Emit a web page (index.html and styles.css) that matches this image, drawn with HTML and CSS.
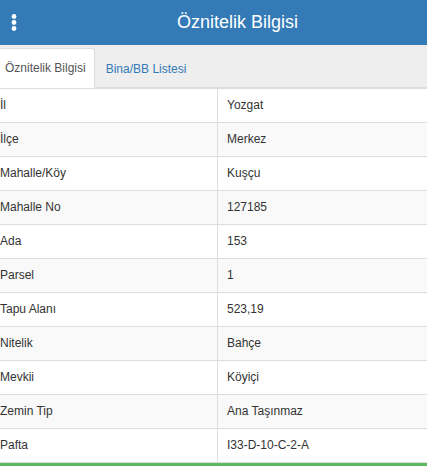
FILE: index.html
```html
<!DOCTYPE html>
<html lang="tr">
<head>
<meta charset="utf-8">
<title>Öznitelik Bilgisi</title>
<link rel="stylesheet" href="styles.css">
</head>
<body>
<header class="topbar">
  <div class="menu">
    <svg width="8" height="20" viewBox="0 0 8 20" aria-hidden="true">
      <circle cx="4" cy="3.5" r="2.4" fill="#fff"/>
      <circle cx="4" cy="9.5" r="2.4" fill="#fff"/>
      <circle cx="4" cy="15.5" r="2.4" fill="#fff"/>
    </svg>
  </div>
  <h1 class="title">Öznitelik Bilgisi</h1>
</header>
<nav class="tabs">
  <a class="tab active">Öznitelik Bilgisi</a>
  <a class="tab">Bina/BB Listesi</a>
</nav>
<table class="attrs">
  <tbody>
    <tr><td>İl</td><td>Yozgat</td></tr>
    <tr><td>İlçe</td><td>Merkez</td></tr>
    <tr><td>Mahalle/Köy</td><td>Kuşçu</td></tr>
    <tr><td>Mahalle No</td><td>127185</td></tr>
    <tr><td>Ada</td><td>153</td></tr>
    <tr><td>Parsel</td><td>1</td></tr>
    <tr><td>Tapu Alanı</td><td>523,19</td></tr>
    <tr><td>Nitelik</td><td>Bahçe</td></tr>
    <tr><td>Mevkii</td><td>Köyiçi</td></tr>
    <tr><td>Zemin Tip</td><td>Ana Taşınmaz</td></tr>
    <tr><td>Pafta</td><td>I33-D-10-C-2-A</td></tr>
  </tbody>
</table>
<div class="footer-line"></div>
</body>
</html>
```
FILE: styles.css
```css
html, body {
  margin: 0;
  padding: 0;
  background: #fff;
  font-family: "Liberation Sans", Arial, sans-serif;
  color: #333;
}

.topbar {
  display: flex;
  align-items: center;
  height: 45px;
  background: #337ab7;
  color: #fff;
}

.menu {
  width: 50px;
  display: flex;
  align-items: center;
  padding-left: 10px;
  box-sizing: border-box;
  padding-top: 1px;
}

.menu svg {
  display: block;
}

.title {
  flex: 1;
  margin: 0;
  text-align: center;
  font-size: 18px;
  font-weight: normal;
  line-height: 45px;
  padding-right: 2px;
}

.tabs {
  display: flex;
  align-items: flex-end;
  height: 43px;
  box-sizing: border-box;
  padding-top: 4px;
  background: #eee;
  border-bottom: 1px solid #ddd;
}

.tab {
  display: block;
  font-size: 12px;
  line-height: 38px;
  height: 38px;
  padding: 0 10px;
  color: #337ab7;
  border: 1px solid transparent;
  border-bottom: none;
  margin-bottom: -1px;
}

.tab.active {
  color: #555;
  background: #fff;
  border-color: #ddd;
  border-left-color: transparent;
  border-radius: 0 3px 0 0;
  padding: 0 8px 0 4px;
  height: 39px;
}

.attrs {
  width: 100%;
  border-collapse: collapse;
  font-size: 12px;
  line-height: 17px;
}

.attrs td {
  border-top: 1px solid #ddd;
  padding: 8px 9px;
  vertical-align: top;
}

.attrs td:first-child {
  width: 208px;
  padding-left: 0;
  border-right: 1px solid #ddd;
}

.attrs tr:nth-child(even) td {
  background: #f9f9f9;
}

.attrs tr:last-child td {
  border-bottom: 1px solid #ddd;
}

.footer-line {
  height: 3px;
  background: #5cb85c;
}
```
